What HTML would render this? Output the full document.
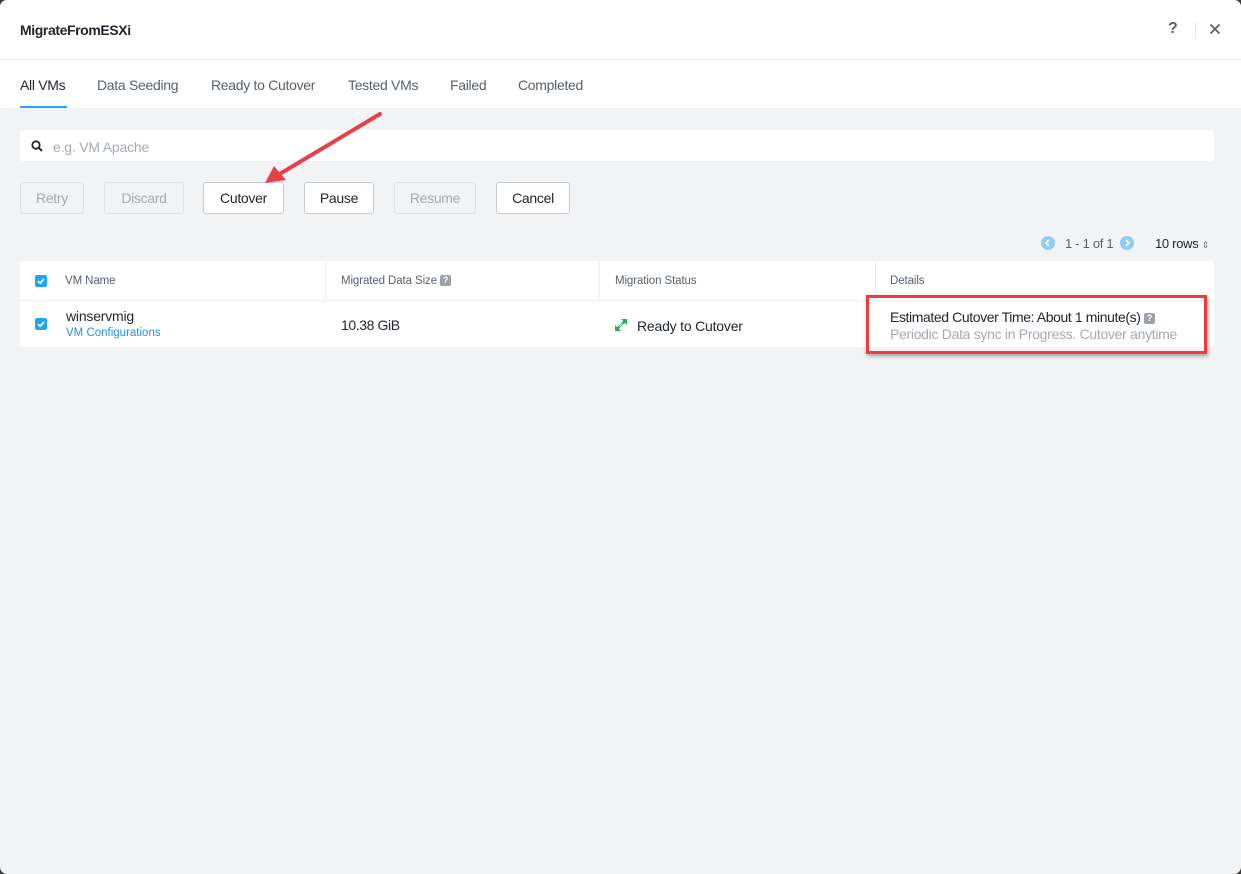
<!DOCTYPE html>
<html><head><meta charset="utf-8"><style>
*{box-sizing:border-box;margin:0;padding:0}
html,body{width:1241px;height:874px;overflow:hidden;background:#3a3a3a;font-family:"Liberation Sans",sans-serif}
.win{position:absolute;left:0;top:0;width:1241px;height:874px;background:#f2f3f5;border-radius:7px;overflow:hidden}
.hdr{position:absolute;left:0;top:0;width:100%;height:60px;background:#fff;border-bottom:1px solid #e9ebee}
.title{position:absolute;left:20px;top:22px;font-size:14px;font-weight:bold;color:#22272e;letter-spacing:-0.4px}
.q{position:absolute;left:1168px;top:20px;font-size:16px;color:#58616b;font-weight:bold}
.sep{position:absolute;left:1195px;top:22px;width:1px;height:16px;background:#e4e6ea}
.x{position:absolute;left:1209px;top:23px}
.tabs{position:absolute;left:0;top:60px;width:100%;height:48px;background:#fff}
.tab{position:absolute;top:17px;font-size:14px;color:#58616b;letter-spacing:-0.3px}
.tab.a{color:#22272e}
.ul{position:absolute;left:20px;top:46px;width:47px;height:2px;background:#22a5f7}
.search{position:absolute;left:20px;top:130px;width:1194px;height:31px;background:#fff;border-radius:3px}
.search span{position:absolute;left:33px;top:9px;font-size:14px;color:#a3aab3;letter-spacing:-0.2px}
.btn{position:absolute;top:182px;height:32px;border:1px solid #c5cad1;border-radius:3px;background:#fff;font-size:14px;color:#22272e;text-align:center;line-height:30px;letter-spacing:-0.3px}
.btn.d{background:#f2f3f5;border-color:#dfe2e6;color:#a3aab3}
.pag{position:absolute;top:236px;font-size:13px;color:#58616b;letter-spacing:-0.3px}
.circ{position:absolute;top:236px;width:14px;height:14px;border-radius:50%;background:#8fcdf6}
.tbl{position:absolute;left:20px;top:261px;width:1194px;height:86px;background:#fff;border-radius:3px}
.hr{position:absolute;left:0;top:39px;width:100%;height:1px;background:#eceef1}
.vd{position:absolute;top:0;width:1px;height:39px;background:#eceef1}
.th{position:absolute;top:14px;font-size:11.5px;color:#58616b;letter-spacing:-0.1px}
.cb{position:absolute;left:15px;width:12px;height:12px;border-radius:2px;background:#22a5f7}
.qm{display:inline-block;width:11px;height:11px;background:#9aa1aa;border-radius:2px;color:#fff;font-size:9px;line-height:11px;text-align:center;font-weight:bold;vertical-align:1px}
.red{position:absolute;left:866px;top:295px;width:341px;height:59px;border:3px solid #ee3b3e;box-shadow:1px 2px 4px rgba(0,0,0,.35)}
</style></head><body><div class="win">
<div class="hdr"><div class="title">MigrateFromESXi</div><div class="q">?</div><div class="sep"></div>
<svg class="x" width="12" height="12" viewBox="0 0 12 12"><path d="M1.5 1.5L10.5 10.5M10.5 1.5L1.5 10.5" stroke="#58616b" stroke-width="1.8"/></svg></div>
<div class="tabs">
<div class="tab a" style="left:20px">All VMs</div>
<div class="tab" style="left:97px">Data Seeding</div>
<div class="tab" style="left:211px">Ready to Cutover</div>
<div class="tab" style="left:348px">Tested VMs</div>
<div class="tab" style="left:450px">Failed</div>
<div class="tab" style="left:518px">Completed</div>
<div class="ul"></div></div>
<div class="search"><svg style="position:absolute;left:11px;top:10px" width="12" height="12" viewBox="0 0 12 12"><circle cx="5" cy="5" r="3.7" stroke="#22272e" stroke-width="1.8" fill="none"/><path d="M7.7 7.7L11 11" stroke="#22272e" stroke-width="2"/></svg><span>e.g. VM Apache</span></div>
<div class="btn d" style="left:20px;width:64px">Retry</div>
<div class="btn d" style="left:104px;width:80px">Discard</div>
<div class="btn" style="left:203px;width:81px">Cutover</div>
<div class="btn" style="left:304px;width:70px">Pause</div>
<div class="btn d" style="left:394px;width:82px">Resume</div>
<div class="btn" style="left:496px;width:74px">Cancel</div>
<svg style="position:absolute;left:1041px;top:236px" width="14" height="14"><circle cx="7" cy="7" r="7" fill="#8fcdf6"/><path d="M8 4L5 7L8 10" stroke="#fff" stroke-width="1.6" fill="none"/></svg>
<div class="pag" style="left:1065px">1 - 1 of 1</div>
<svg style="position:absolute;left:1120px;top:236px" width="14" height="14"><circle cx="7" cy="7" r="7" fill="#8fcdf6"/><path d="M6 4L9 7L6 10" stroke="#fff" stroke-width="1.6" fill="none"/></svg>
<div class="pag" style="left:1155px;color:#22272e">10 rows <span style="font-size:9px;color:#6b7580">⇕</span></div>
<div class="tbl">
<div class="vd" style="left:305px"></div><div class="vd" style="left:579px"></div><div class="vd" style="left:855px"></div><div class="hr"></div>
<svg class="cb" style="top:14px" viewBox="0 0 12 12"><path d="M3 6.2L5.2 8.2L9 3.8" stroke="#fff" stroke-width="1.7" fill="none"/></svg>
<svg class="cb" style="top:57px" viewBox="0 0 12 12"><path d="M3 6.2L5.2 8.2L9 3.8" stroke="#fff" stroke-width="1.7" fill="none"/></svg>
<div class="th" style="left:45px">VM Name</div>
<div class="th" style="left:321px">Migrated Data Size <span class="qm">?</span></div>
<div class="th" style="left:595px">Migration Status</div>
<div class="th" style="left:870px">Details</div>
<div style="position:absolute;left:46px;top:47px;font-size:14px;color:#22272e;letter-spacing:-0.2px">winservmig</div>
<div style="position:absolute;left:46px;top:66px;font-size:11.5px;color:#2293e0">VM Configurations</div>
<div style="position:absolute;left:321px;top:56px;font-size:14px;color:#22272e;letter-spacing:-0.4px">10.38 GiB</div>
<svg style="position:absolute;left:595px;top:58px" width="12" height="12" viewBox="0 0 12 12"><path d="M6 0h6v6z" fill="#2eaa5a"/><path d="M0 6v6h6z" fill="#2eaa5a"/><path d="M2.5 9.5L9.5 2.5" stroke="#2eaa5a" stroke-width="2.4"/><path d="M4.5 7.5L7.5 4.5" stroke="#fff" stroke-width="1"/></svg>
<div style="position:absolute;left:617px;top:57px;font-size:14px;color:#22272e;letter-spacing:-0.2px">Ready to Cutover</div>
<div style="position:absolute;left:870px;top:48px;font-size:14px;color:#22272e;letter-spacing:-0.4px">Estimated Cutover Time: About 1 minute(s) <span class="qm">?</span></div>
<div style="position:absolute;left:870px;top:65px;font-size:14px;color:#a3aab3;letter-spacing:-0.3px">Periodic Data sync in Progress. Cutover anytime</div>
</div>
<div class="red"></div>
<svg style="position:absolute;left:0;top:0" width="1241" height="874"><path d="M380 114L278 175" stroke="#e8404a" stroke-width="4" stroke-linecap="round"/><path d="M265 183L274 166L286 180Z" fill="#e8404a"/></svg>
</div></body></html>
